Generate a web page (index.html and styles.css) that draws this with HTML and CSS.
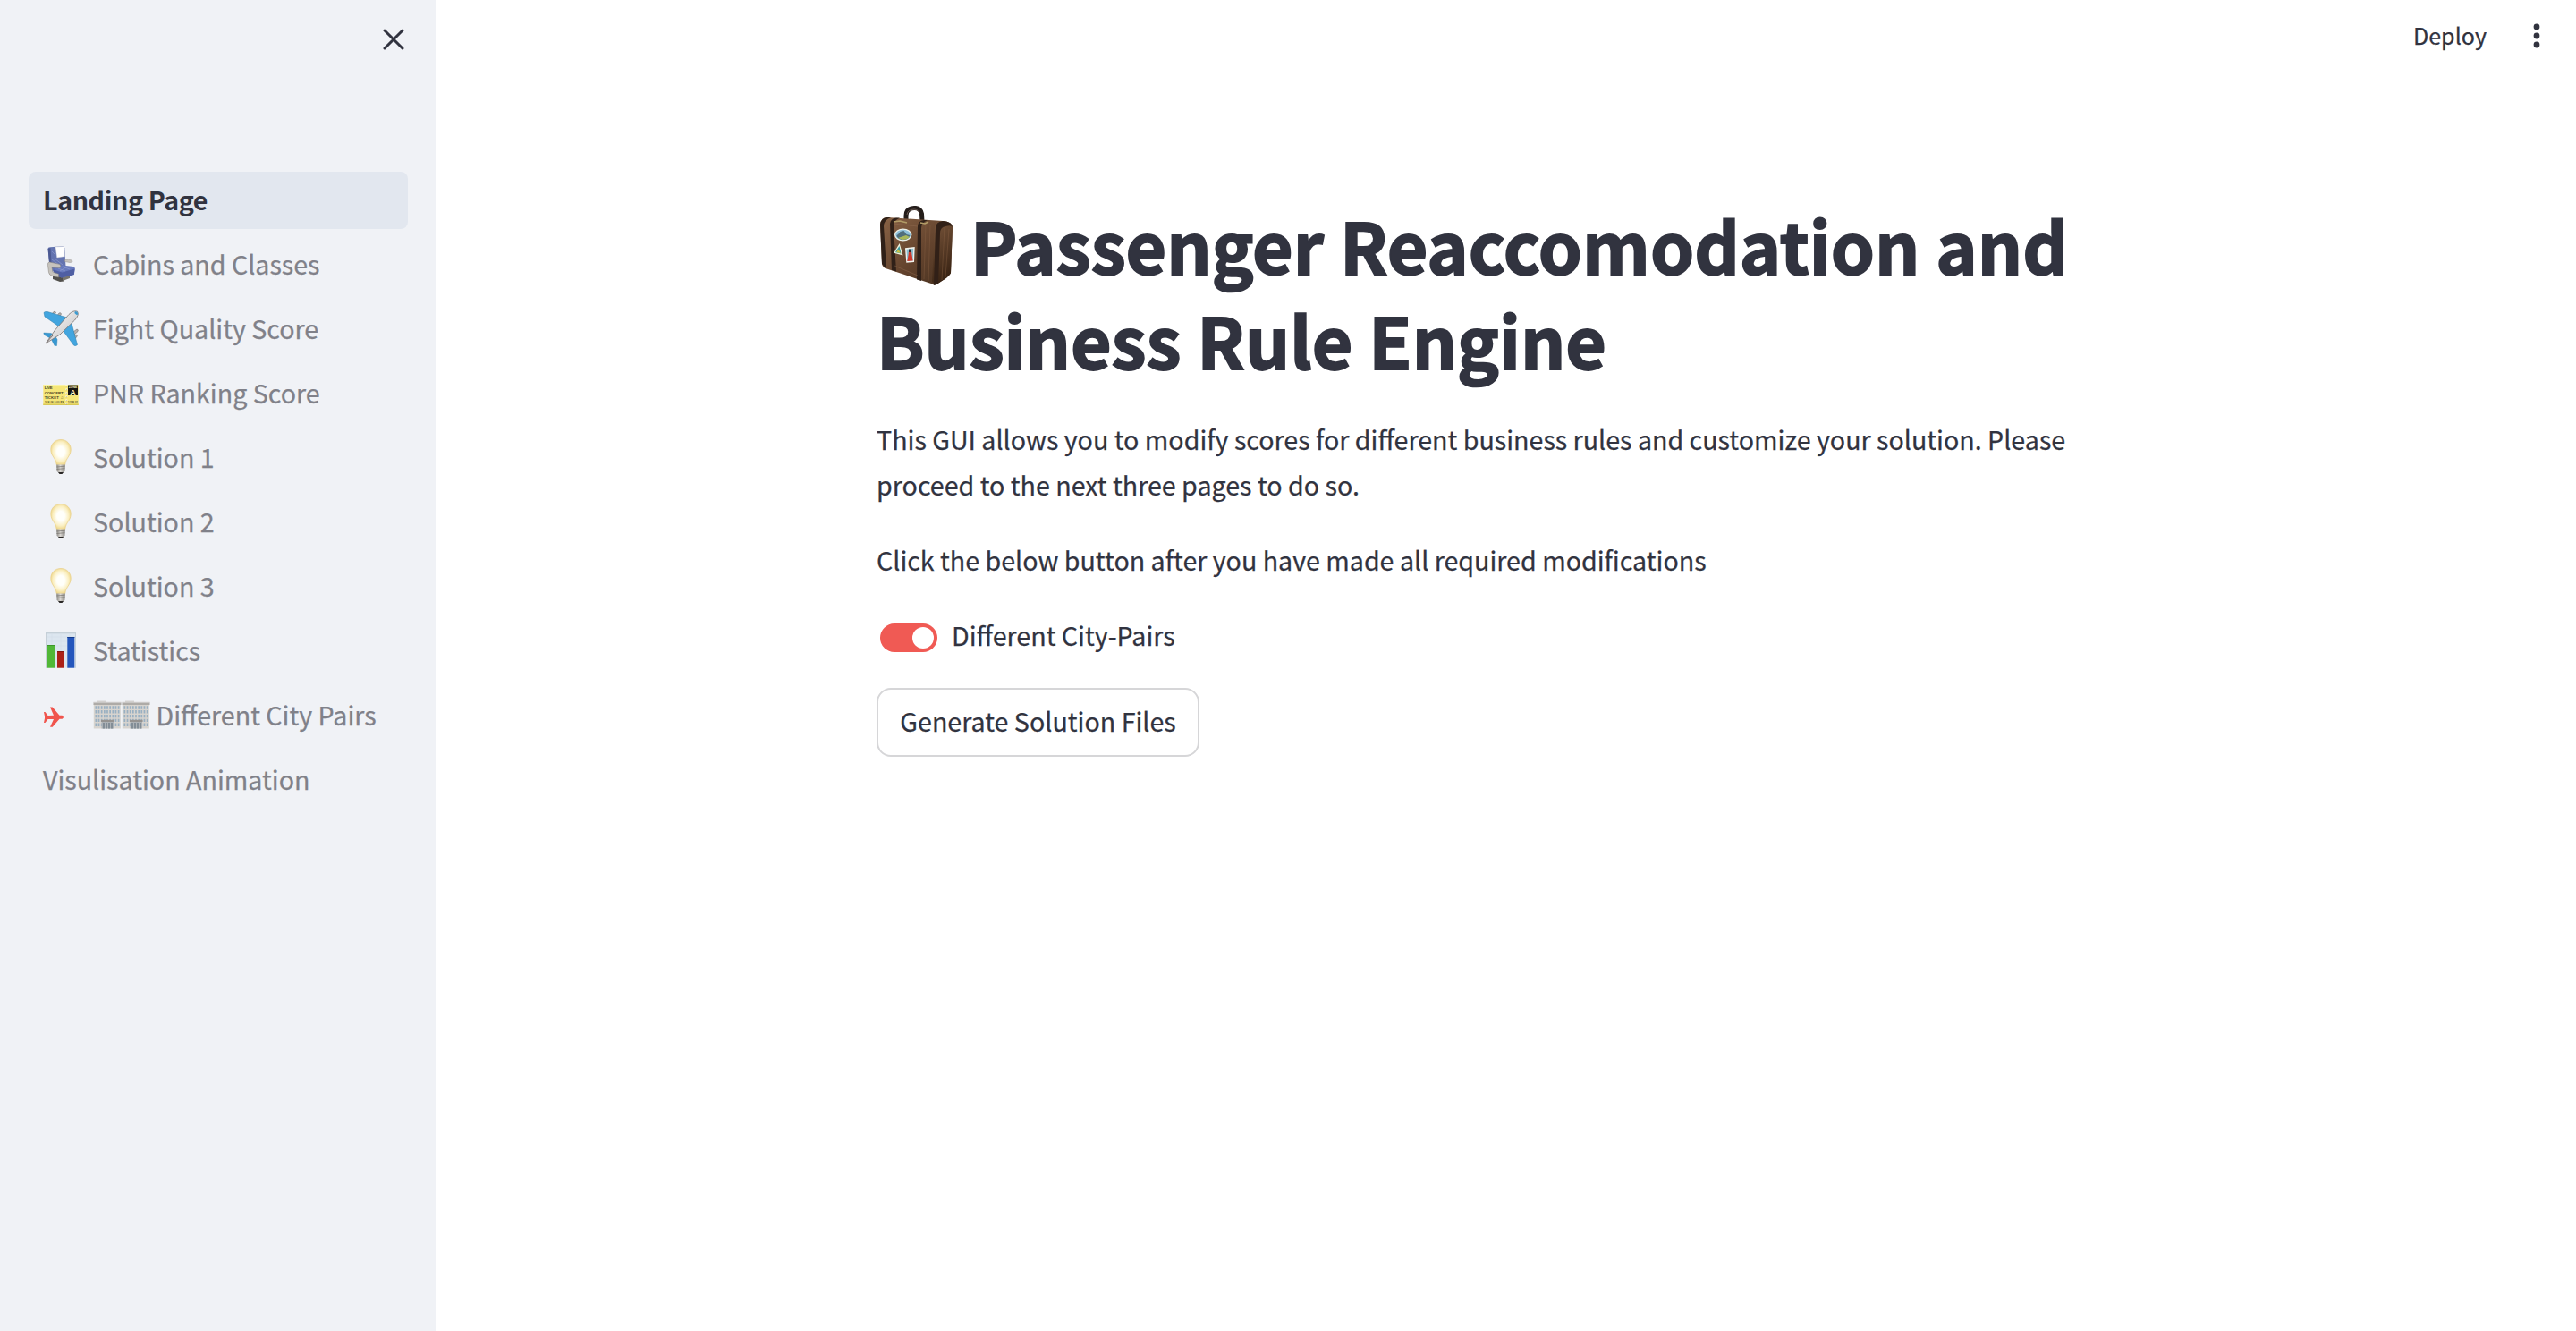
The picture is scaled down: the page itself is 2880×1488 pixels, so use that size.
FILE: index.html
```html
<!DOCTYPE html>
<html lang="en">
<head>
<meta charset="utf-8">
<title>Landing Page</title>
<link rel="stylesheet" href="styles.css">
</head>
<body>
<svg class="defs" width="0" height="0" aria-hidden="true">
  <defs>
    <radialGradient id="glass" cx=".5" cy=".48" r=".55"><stop offset=".35" stop-color="#fffffa"/><stop offset=".7" stop-color="#fbf0c4"/><stop offset="1" stop-color="#ecd382"/></radialGradient>
    <linearGradient id="cap" x1="0" x2="1"><stop offset="0" stop-color="#8b8984"/><stop offset=".45" stop-color="#dad7d2"/><stop offset="1" stop-color="#85827d"/></linearGradient>
    <linearGradient id="leather" x1="0" x2="1" y2="1"><stop offset="0" stop-color="#8a6346"/><stop offset=".55" stop-color="#63432d"/><stop offset="1" stop-color="#46301f"/></linearGradient>
    <linearGradient id="side" x1="0" x2=".3" y2="1"><stop offset="0" stop-color="#7b573c"/><stop offset="1" stop-color="#3a2414"/></linearGradient>
    <linearGradient id="hull" x1="0" x2="1" y2="1"><stop offset="0" stop-color="#fff"/><stop offset=".6" stop-color="#d8d6d6"/><stop offset="1" stop-color="#8d8a8a"/></linearGradient>
    <symbol id="bulb" viewBox="0 0 40 40">
      <path d="M20 .5C13.200 .5 8.800 5.500 8.800 11.500c0 7.500 5.800 9.500 6.400 17h9.600c.6-7.500 6.400-9.500 6.400-17C31.200 5.500 26.800 .5 20 .5z" fill="url(#glass)" stroke="#e8cf86" stroke-width=".7"/>
      <path d="M15.200 28.500h9.600l-.4 7.500-2 1.500h-4.800l-2-1.500z" fill="url(#cap)"/>
      <path d="M15.300 31l9.300-.8M15.400 33.500l9.100-.8" stroke="#77746e" stroke-width=".7"/>
      <path d="M17 37h6l-1.500 2h-3z" fill="#292725"/>
    </symbol>
    <symbol id="office" viewBox="0 0 32 32">
      <rect x="4" y=".5" width="10" height="3" fill="#cfcdcb"/>
      <rect x=".8" y="4" width="30" height="27.500" fill="#d3cfc9"/>
      <path d="M2.500 8h27M2.500 12.800h27M2.500 17.600h27M2.500 22.400h27M2.500 27.200h27" stroke="#8ba5b9" stroke-width="3.400" stroke-dasharray="1.700 1.460"/>
      <path d="M.5 2.500h31v2.500H.5z" fill="#a39f9a"/>
      <path d="M.5 2.300h31" stroke="#c5c2be"/>
      <path d="M9.500 22.500h13.500v9h-13.500z" fill="#a1a6aa"/>
      <path d="M9 21.800h14.500v2.200H9z" fill="#85827f"/>
      <path d="M11 25h2v6.500h-2zM14 25h2v6.500h-2zM17 25h2v6.500h-2zM20 25h2v6.500h-2z" fill="#6f7c86"/>
    </symbol>
  </defs>
</svg>
<div class="app">
  <aside class="sidebar">
    <div class="sidebar-head">
      <svg class="close" viewBox="0 0 24 24"><path d="M2 2l20 20M22 2L2 22"/></svg>
    </div>
    <nav class="nav">
      <a class="item active"><span class="label">Landing Page</span></a>
      <a class="item">
        <svg class="icon" viewBox="0 0 40 40">
          <path d="M11 33l12-1v7.500l-4 .5-8-3z" fill="#51504c"/><path d="M22 33l8-2v5l-8 3z" fill="#77756f"/>
          <path d="M5.500 3Q5.500 1.500 8 1.200L22 .3q2 0 2.200 2L25.500 23 10 29 7 18z" fill="#6474b0"/>
          <path d="M5.600 3L7.500 24l2.500 5L8.500 2z" fill="#4b5992"/>
          <path d="M14 1l9.500-.6 .8 11.300-8.600 1.200z" fill="#fff" stroke="#c8cbd5" stroke-width=".4"/>
          <path d="M12 26l10-4.500 12 1.500q2 .5 1.800 2.500l-1 6.500-14 3.500-9-4z" fill="#687abd"/>
          <path d="M12 26.500l9.500 3 14-4-.8 6.500L21 35.500l-9-4z" fill="#4f5fa3"/>
          <path d="M10 15l8 6M13 14l9 7M17 25l8 3M22 23l8 3M10 6l4 4M27 23l-8 5" stroke="#8b9ad0" stroke-width=".7"/>
          <path d="M24.500 15.500q4-.8 8 .5l.5 2-3 .5-5.500-1z" fill="#c7c4bf" stroke="#85827e" stroke-width=".4"/>
          <path d="M7.500 18q-2.500 0-2 3.500l1 8q.5 3 4 4l7 1.500v-3.800l-6.500-2-1-5.200 9 .5q1.500-2 0-4z" fill="#c6c3bd" stroke="#85817b" stroke-width=".5"/>
        </svg>
        <span class="label">Cabins and Classes</span></a>
      <a class="item">
        <svg class="icon" viewBox="0 0 40 40">
          <path d="M9 5.500l3-4q2-1 2.500 1L11 7zM15 7l3-4q2-1 2.500 1L17.500 9zM34 24l4-3q2 .5 1 2.500l-4 3.500zM33 30l4-3q2 .5 1 2.500l-4 3.500z" fill="#b5b1af" stroke="#706e6d" stroke-width=".6"/>
          <path d="M1 2.500Q2 1 5 1.500L27 8 18 18 2 7z" fill="#42a5df" stroke="#287ba9" stroke-width=".5"/>
          <path d="M38.500 38.500q-2 2-4 .5L22 22l9.500-9.500z" fill="#42a5df" stroke="#287ba9" stroke-width=".5"/>
          <path d="M.8 25l8.200.5 4 2.500-5 3-6.500-3.500zM15.500 39.500l.5-7-3-5-3.500 5 3.500 7z" fill="#3898d2" stroke="#287ba9" stroke-width=".4"/>
          <path d="M3 37L13.500 22 29 4.500Q34-.5 38.500 1.200 41 5 35.500 11L19 27z" fill="url(#hull)" stroke="#77716f" stroke-width=".8"/>
          <path d="M36 1l2.500.8.8 2.700-1.800.5-2.200-2z" fill="#3d9bd0"/>
          <path d="M3 37l8-9" stroke="#777170" stroke-width="1"/>
        </svg>
        <span class="label">Fight Quality Score</span></a>
      <a class="item">
        <svg class="icon" viewBox="0 -2.500 40 40">
          <path d="M.3 8.500h39.400v23H.3z" fill="#f5e678"/><path d="M.3 8.500h39.400v2H.3z" fill="#faf3a2"/><path d="M.3 30h39.400v1.500H.3z" fill="#d9c957"/>
          <g class="ticket-text" font-size="4.300"><text x="1.700" y="13.800" textLength="9">LIVE</text><text x="1.700" y="19" textLength="21">CONCERT</text><text x="1.700" y="24.200" textLength="21">TICKET ♫</text></g>
          <g class="ticket-text" font-size="2.600"><text x="1.700" y="29.800" textLength="22">JAN 08 8:00 PM</text><text x="28" y="29.800" textLength="11">1/5 B-01</text></g>
          <path d="M28 9h11v11.500H28z" fill="#161510"/>
          <text class="zone" x="28.700" y="12.300" font-size="3.400" textLength="9.600">ZONE</text><text class="zone" x="33.500" y="20" font-size="9" text-anchor="middle">A</text>
          <path d="M26.300 9v22" stroke="#fffef0" stroke-width="2" stroke-dasharray="1.500 2.500"/><path d="M26.300 10v21" stroke="#958d5c" stroke-width="1" stroke-dasharray=".7 3.300"/>
        </svg>
        <span class="label">PNR Ranking Score</span></a>
      <a class="item"><svg class="icon"><use href="#bulb"/></svg><span class="label">Solution 1</span></a>
      <a class="item"><svg class="icon"><use href="#bulb"/></svg><span class="label">Solution 2</span></a>
      <a class="item"><svg class="icon"><use href="#bulb"/></svg><span class="label">Solution 3</span></a>
      <a class="item">
        <svg class="icon" viewBox="0 0 40 40">
          <path d="M3 .3h34v39.400H3z" fill="#dce6ef"/><path d="M3 .3h34v1H3zM3 .3h.7v39.400H3zM36.300 .3h.7v39.400h-.7z" fill="#bcc7cf"/>
          <path d="M4 5h32M4 10h32M4 15h32M10 2v37M20 2v37M30 2v37" stroke="#d0dae4" stroke-width=".5"/>
          <path d="M5 14h8v25.700H5z" fill="#51b737"/><path d="M16 21h8v18.700h-8z" fill="#ab2118"/><path d="M27.300 5h8v34.700h-8z" fill="#2456bc"/>
          <path d="M5 14h8v1H5z" fill="#3c972a"/><path d="M16 21h8v1h-8z" fill="#841711"/><path d="M27.300 5h8v1h-8z" fill="#143b8e"/>
        </svg>
        <span class="label">Statistics</span></a>
      <a class="item">
        <svg class="icon plane" viewBox="0 -2.500 40 40"><path d="M1 14.500h1.500l3 4 6.500-.2L8 9h2.700l7.800 9.200h3Q23 20 23 20.500t-1.500 1.700h-3L10.700 31.300H8l4-8.700-6.500-.2-3 4H1l1-5v-1.800z"/></svg>
        <span class="label"><svg class="office"><use href="#office"/></svg><svg class="office"><use href="#office"/></svg><span class="label-text">Different City Pairs</span></span></a>
      <a class="item"><span class="label">Visulisation Animation</span></a>
    </nav>
  </aside>
  <main class="main">
    <header class="toolbar">
      <span class="deploy">Deploy</span>
      <svg class="dots" viewBox="0 0 8 28"><circle cx="4" cy="4" r="3.400"/><circle cx="4" cy="14" r="3.400"/><circle cx="4" cy="24" r="3.400"/></svg>
    </header>
    <section class="content">
      <h1><svg class="suitcase" viewBox="0 0 84 90">
        <path d="M31 17V11Q31 3 40 2.500 47 2 48.500 9L49 18" fill="none" stroke="#241d1a" stroke-width="5"/>
        <path d="M32 10Q33 4 40 4q5 0 6 5" fill="none" stroke="#695952" stroke-width="1"/>
        <path d="M2 21Q3 13 10 13l62 4q11 1 11 7l-2 51q-1 4-17 13.500Q62 89 59 87L8 70q-4-2-4-6z" fill="url(#leather)"/>
        <path d="M63 24q0-6 8-7 11 1 12 7l-2 51q-1 4-17 13.500L60 85z" fill="url(#side)"/>
        <path d="M2 21Q3 13 10 13h4q-8 3-8 10l3 48-5-6zM13 20q1-6 7-6.500h4q-7 3-7 9l3 51-5-1.500zM44 23q0-6 7-7h4q-7 3-7 9v59l-5-1.500z" fill="#2f2018"/>
        <path d="M64 25q0-7 8-8 11 1 11 7-1-3-8-1-6 1-6 8l-2 56-5 2z" fill="#312017"/>
        <path d="M17 20l27 3M18 67l26 11" stroke="#9d765a" stroke-width=".6" opacity=".6"/>
        <path d="M53 20l-2 62M58 22l-2 62M74 24l-3 59M79 26l-4 54" stroke="#8a6245" stroke-width="1" opacity=".4"/>
        <path d="M17 18l7-1 8 2M47 19l5 1 4-2" fill="none" stroke="#b29c67" stroke-width="1.600"/>
        <ellipse cx="27.700" cy="32.500" rx="9.700" ry="7" fill="#edf1e9"/><ellipse cx="27.700" cy="32.500" rx="8.400" ry="5.700" fill="#8dc0da"/>
        <path d="M20.500 33q2-1 4-4l4-1 3 4 4 1q-2 5-7.500 5t-7.500-4z" fill="#506e7c"/><path d="M22 36l9-3 4 2q-3 3-8 3z" fill="#a9b85a"/>
        <path d="M23.700 42l3.800 13.500-10.300-2.700z" fill="#eef2dd"/><path d="M23.500 45l2 8.500-6.500-1.500z" fill="#3a9ba5"/><path d="M22.500 48.500l2.500 4.500-5-1z" fill="#c9c246"/>
        <path d="M30 47.300l10.700-1.300-.7 17-8.700.7z" fill="#f1f3ee"/><path d="M31.500 48.800l7.700-1-.6 13.700-6.200.5z" fill="#8cc0d0"/><path d="M34 50.500h3l.4 4 1.300 7-6.400.5 1.300-7z" fill="#cf3a2e"/><path d="M34 48.500h3v3.500h-3z" fill="#342d30"/>
      </svg><span>Passenger Reaccomodation and</span><br><span>Business Rule Engine</span></h1>
      <p>This GUI allows you to modify scores for different business rules and customize your solution. Please<br>proceed to the next three pages to do so.</p>
      <p>Click the below button after you have made all required modifications</p>
      <label class="toggle"><span class="track"><span class="thumb"></span></span><span class="toggle-text">Different City-Pairs</span></label>
      <button class="button">Generate Solution Files</button>
    </section>
  </main>
</div>
</body>
</html>
```
FILE: styles.css
```css
* { box-sizing: border-box; }
body { margin: 0; background: #fff; color: #31333f; font-family: "Noto Sans CJK SC", "Noto Sans", sans-serif; font-size: 28.64px; line-height: 51.2px; -webkit-text-stroke: 0.25px currentColor; }
.defs { position: absolute; }
.app { display: flex; height: 1488px; overflow: hidden; }
.sidebar { width: 488px; flex: none; background: #f0f2f6; }
.sidebar-head { height: 192px; padding: 32px 36px 0 0; display: flex; justify-content: flex-end; align-items: flex-start; }
.close { width: 24px; height: 24px; fill: none; stroke: #31333f; stroke-width: 3; stroke-linecap: round; }
.nav { display: flex; flex-direction: column; gap: 8px; padding: 0 32px; }
.item { height: 64px; border-radius: 8px; padding: 0 16px; display: flex; align-items: center; gap: 16px; color: #808189; }
.active { background: #e2e7ef; color: #31333f; font-weight: 700; letter-spacing: -0.4px; -webkit-text-stroke: 0; }
.icon { width: 40px; height: 40px; flex: none; margin-bottom: 2px; }
.plane { fill: #f0554d; }
.label { display: flex; align-items: center; white-space: nowrap; padding-bottom: 3px; }
.office { width: 32px; height: 32px; margin-top: 2px; opacity: .85; }
.label-text { margin-left: 6.500px; }
.ticket-text { font-family: "Liberation Sans", sans-serif; font-weight: 700; fill: #4a4526; -webkit-text-stroke: 0; }
.zone { font-family: "Liberation Sans", sans-serif; font-weight: 700; fill: #fff9c3; -webkit-text-stroke: 0; }
.main { flex: 1; }
.toolbar { height: 80px; padding-right: 40px; display: flex; align-items: center; justify-content: flex-end; gap: 52px; font-size: 25.1px; }
.deploy { margin-bottom: 1px; }
.dots { width: 8px; height: 28px; fill: #31333f; }
.content { width: 1408px; margin: 0 auto; padding-top: 141px; display: flex; flex-direction: column; align-items: flex-start; white-space: nowrap; }
h1 { margin: 0; height: 244px; font-size: 78.65px; line-height: 105.6px; font-weight: 700; -webkit-text-stroke: 1.8px #31333f; }
.suitcase { width: 84px; height: 90px; margin: 0 19px 0 2px; vertical-align: -13px; }
p { margin: 0 0 32.8px; }
.toggle { height: 50px; margin-top: 3.8px; display: flex; align-items: center; gap: 16px; padding-left: 4px; }
.toggle-text { margin-bottom: 7px; }
.track { width: 64px; height: 32px; border-radius: 16px; background: #f05a54; display: flex; align-items: center; justify-content: flex-end; padding: 4px; }
.thumb { width: 24px; height: 24px; border-radius: 50%; background: #fff; }
.button { width: 361px; height: 77px; margin-top: 31px; padding: 0 0 4px; border: 2px solid #d6d6d8; border-radius: 16px; background: #fff; color: inherit; font: inherit; -webkit-text-stroke: inherit; }
```
